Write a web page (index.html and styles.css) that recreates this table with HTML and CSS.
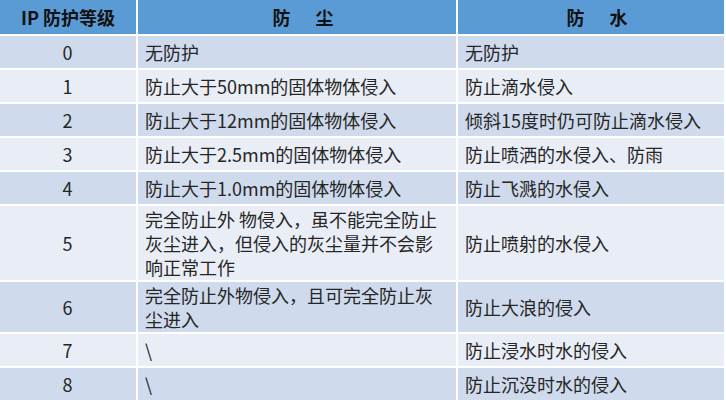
FILE: index.html
```html
<!DOCTYPE html>
<html lang="zh-CN">
<head>
<meta charset="utf-8">
<link rel="stylesheet" href="styles.css">
</head>
<body>
<div class="tbl">
  <div class="c h num">IP 防护等级</div>
  <div class="c h mid"><span>防</span><span class="sp"></span><span>尘</span></div>
  <div class="c h mid"><span>防</span><span class="sp"></span><span>水</span></div>

  <div class="c d num">0</div>
  <div class="c d">无防护</div>
  <div class="c d">无防护</div>

  <div class="c l num">1</div>
  <div class="c l">防止大于50mm的固体物体侵入</div>
  <div class="c l">防止滴水侵入</div>

  <div class="c d num">2</div>
  <div class="c d">防止大于12mm的固体物体侵入</div>
  <div class="c d">倾斜15度时仍可防止滴水侵入</div>

  <div class="c l num">3</div>
  <div class="c l">防止大于2.5mm的固体物体侵入</div>
  <div class="c l">防止喷洒的水侵入、防雨</div>

  <div class="c d num">4</div>
  <div class="c d">防止大于1.0mm的固体物体侵入</div>
  <div class="c d">防止飞溅的水侵入</div>

  <div class="c l num">5</div>
  <div class="c l">完全防止外 物侵入，虽不能完全防止灰尘进入，但侵入的灰尘量并不会影响正常工作</div>
  <div class="c l">防止喷射的水侵入</div>

  <div class="c d num">6</div>
  <div class="c d">完全防止外物侵入，且可完全防止灰尘进入</div>
  <div class="c d">防止大浪的侵入</div>

  <div class="c l num">7</div>
  <div class="c l">\</div>
  <div class="c l">防止浸水时水的侵入</div>

  <div class="c d num">8</div>
  <div class="c d">\</div>
  <div class="c d">防止沉没时水的侵入</div>
</div>
</body>
</html>
```
FILE: styles.css
```css
html, body {
  margin: 0;
  padding: 0;
  background: #ffffff;
}
body {
  width: 726px;
  height: 400px;
  overflow: hidden;
  font-family: "Noto Sans CJK SC", "Noto Sans", sans-serif;
  font-size: 18px;
  color: #262626;
}
.tbl {
  display: grid;
  grid-template-columns: 136px 318px 266px;
  grid-template-rows: 34px;
  grid-auto-rows: minmax(32px, auto);
  gap: 2px;
  background: #ffffff;
}
.c {
  display: flex;
  align-items: center;
  padding: 1px 8px 1px 7px;
  line-height: 24px;
}
.h {
  background: #5b9bd5;
  color: #111111;
  font-weight: bold;
  padding: 0 8px;
}
.num {
  justify-content: center;
  text-align: center;
}
.mid {
  justify-content: center;
  padding-left: 20px;
}
.sp {
  display: inline-block;
  width: 25px;
}
.d {
  background: #cfdaec;
}
.l {
  background: #e9edf5;
}
```
